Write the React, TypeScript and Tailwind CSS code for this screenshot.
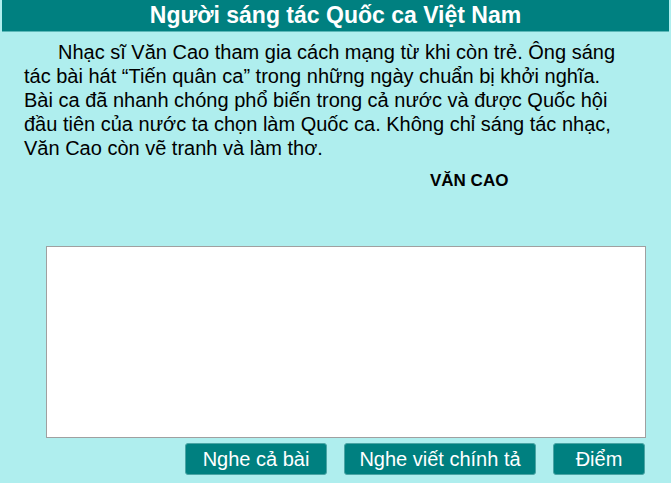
import { useState } from 'react';

const font = { fontFamily: '"Liberation Sans", Arial, sans-serif' };

export default function App() {
  const [answer, setAnswer] = useState('');

  return (
    <div className="w-[671px] h-[483px] bg-[#afeeee] flex flex-col overflow-hidden" style={font}>
      {/* title bar */}
      <div className="h-[32px] mx-[2px] bg-[#008080] border-b border-[#5cb8b8] flex items-center justify-center">
        <h1 className="text-[23px] font-bold text-white leading-none">Người sáng tác Quốc ca Việt Nam</h1>
      </div>

      <p className="mt-[8px] ml-[24px] w-[606px] text-[20px] leading-[24px] text-black indent-[34px]">
        Nhạc sĩ Văn Cao tham gia cách mạng từ khi còn trẻ. Ông sáng tác bài hát “Tiến quân ca” trong những ngày chuẩn bị khởi nghĩa. Bài ca đã nhanh chóng phổ biến trong cả nước và được Quốc hội đầu tiên của nước ta chọn làm Quốc ca. Không chỉ sáng tác nhạc, Văn Cao còn vẽ tranh và làm thơ.
      </p>

      <div className="mt-[9px] ml-[430px] text-[17px] leading-[24px] font-bold text-black">VĂN CAO</div>

      <textarea
        value={answer}
        onChange={(e) => setAnswer(e.target.value)}
        className="mt-[53px] ml-[46px] w-[600px] h-[192px] bg-white border border-[#a0a0a0] resize-none outline-none p-1 text-[18px]"
      />

      <div className="mt-[5px] mr-[26px] flex justify-end gap-[17px]">
        <button className="w-[142px] h-[32px] bg-[#008080] border border-[#4aa5a5] rounded-[3px] text-white text-[20px]">Nghe cả bài</button>
        <button className="w-[192px] h-[32px] bg-[#008080] border border-[#4aa5a5] rounded-[3px] text-white text-[20px]">Nghe viết chính tả</button>
        <button className="w-[92px] h-[32px] bg-[#008080] border border-[#4aa5a5] rounded-[3px] text-white text-[20px]">Điểm</button>
      </div>
    </div>
  );
}
